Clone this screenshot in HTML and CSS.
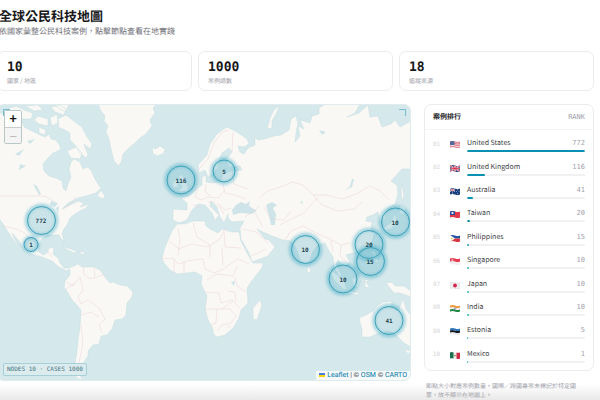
FILE: index.html
```html
<!DOCTYPE html>
<html lang="zh-Hant">
<head>
<meta charset="utf-8">
<meta name="viewport" content="width=device-width, initial-scale=1">
<title>全球公民科技地圖</title>
<link rel="stylesheet" href="styles.css">
</head>
<body>
<main class="page">
  <header class="intro">
    <h1>全球公民科技地圖</h1>
    <p>依國家彙整公民科技案例，點擊節點查看在地實踐</p>
  </header>

  <section class="stats">
    <div class="card stat"><strong>10</strong><span>國家 / 地區</span></div>
    <div class="card stat"><strong>1000</strong><span>案例總數</span></div>
    <div class="card stat"><strong>18</strong><span>追蹤來源</span></div>
  </section>

  <div class="content">
    <section class="map" aria-label="地圖">
      <svg class="world" viewBox="-2 105 412 275" preserveAspectRatio="xMidYMid slice">
        <defs>
          <filter id="glow" x="-50%" y="-50%" width="200%" height="200%"><feGaussianBlur stdDeviation="1.600"/></filter>
        </defs>
        <g class="land">
          <!-- North and Central America -->
          <path d="M-3 112L4 114 10 111 17 113 21 118 24 127 30 130 38 134 45 137 49 134 51 139 56 140 59 144 61 149 58 151 53 153 48 158 43 164 44 171 49 176 56 178 62 181 63 188 66 191 68 184 71 177 69 169 71 162 74 159 80 162 83 169 87 167 91 170 94 177 98 184 101 188 96 193 86 196 78 198 68 203 62 209 70 205 78 201 84 203 80 207 89 204 86 208 80 211 75 214 70 218 67 225 64 229 62 233 64 241 61 239 59 235 48 235 42 239 38 246 39 252 43 255 47 253 49 248 54 247 53 254 58 258 60 263 64 268 70 268 67 271 59 267 52 261 42 257 31 254 24 249 19 241 12 233 15 240 20 246 14 241 8 232 3 224-3 216Z"/>
          <!-- Arctic islands -->
          <path d="M10 117L7 109 16 106 24 110 33 113 31 119 20 119ZM25 106L38 105 43 110 34 111ZM38 116L48 119 48 126 39 124 34 120ZM50 118L57 114 58 123 52 126ZM51 107L60 105 66 109 64 115 55 112ZM39 127L46 130 45 135 39 133ZM58 119L66 115 75 122 82 127 87 137 92 144 90 149 84 144 88 155 86 158 79 152 75 145 70 140 70 133 63 129 59 128ZM53 104L69 104 66 112 60 109ZM67 151L76 147 82 153 80 159 71 158ZM97 196L101 190 105 196 103 199Z"/>
          <!-- Greenland and Iceland -->
          <path d="M98 104L101 111 105 116 104 121 108 126 106 132 109 139 111 149 114 161 119 166 122 160 123 154 129 148 135 143 140 138 146 134 152 126 150 120 155 113 153 108 157 104ZM152 147L155 149 160 146 165 149 164 153 158 156 153 154Z"/>
          <!-- South America -->
          <path d="M68 268L74 266 78 264 82 267 94 267 100 270 105 277 110 283 113 282 120 285 127 286 133 292 132 297 127 303 126 315 122 319 115 320 112 329 107 335 101 336 99 344 93 345 88 351 88 356 84 362 82 369 80 374 82 380 77 378 75 372 75 363 77 351 78 340 80 327 81 310 76 304 72 300 68 293 64 287 65 281 70 275 70 270Z"/>
          <path d="M62 246L71 249 78 252 74 253 66 249ZM79 251L86 253 82 255Z"/>
          <!-- Africa and Madagascar -->
          <path d="M177 224L185 224 193 221 205 221 206 226 210 229 218 233 222 229 232 232 239 232 241 241 247 253 253 263 263 263 262 268 258 273 251 282 247 288 248 303 241 310 239 318 233 328 225 335 217 337 214 335 212 327 208 320 205 309 207 296 201 284 202 276 195 272 187 273 177 274 170 270 164 263 162 259 164 250 168 240 172 231ZM260 300L262 305 257 320 253 319 253 308Z"/>
          <!-- Europe and Asia -->
          <path d="M173 209L187 210 187 203 181 198 189 196 194 192 199 187 202 185 202 177 206 175 206 182 213 183 221 181 223 173 232 171 242 170 240 166 229 167 226 160 232 152 229 148 222 153 220 158 218 168 212 174 208 177 205 170 199 173 198 165 207 155 210 144 217 134 222 130 227 127 237 132 247 139 249 144 244 147 238 146 240 152 244 154 248 148 255 145 255 137 258 140 264 139 274 136 281 135 289 130 291 119 296 116 298 123 296 133 295 142 300 136 298 126 304 129 300 120 310 123 312 116 319 114 319 108 325 104 360 104 355 113 347 117 359 113 368 105 370 117 378 116 382 127 391 124 395 120 400 127 411 121 411 169 402 169 391 181 397 185 398 194 395 204 387 209 385 220 380 222 378 212 373 215 367 217 366 221 372 222 371 229 374 234 372 242 365 248 353 253 346 255 350 262 344 267 338 260 336 264 342 276 339 276 334 267 333 257 329 251 325 243 318 245 313 251 309 263 305 265 300 260 296 248 291 241 283 240 272 236 263 232 257 229 265 239 269 240 275 247 268 256 252 262 249 253 241 239 240 228 244 221 232 222 228 218 228 214 224 223 220 217 217 207 211 201 210 206 219 215 215 221 212 213 205 205 198 204 192 210 187 220 179 223 173 220Z"/>
          <path d="M180 184L179 176 183 174 184 180 188 186 188 191 178 192 182 187ZM173 188L173 181 178 180 178 187ZM267 129L270 118 274 110 280 105 276 114 272 121 272 128ZM308 266L311 270 309 274 307 271Z"/>
          <!-- Australia, Japan and the Pacific islands -->
          <path d="M359 318L366 315 373 311 378 305 383 302 392 301 391 307 398 311 403 299 406 309 411 316 411 347 404 343 396 335 389 331 379 333 370 337 362 337 362 330ZM386 283L392 282 395 286 404 286 411 291 411 297 400 293 394 293 389 287ZM328 268L334 272 344 281 347 290 343 289 334 280ZM347 291L359 293 358 295 347 293ZM352 279L358 276 361 279 358 287 353 286ZM365 280L371 279 366 282 370 288 365 287ZM371 250L376 253 379 263 374 262ZM402 184L404 196 402 201 401 191ZM400 205L406 208 403 215 399 212ZM395 213L397 222 391 229 384 231 384 227 391 223ZM404 349L411 351 408 354Z"/>
        </g>
        <g class="water">
          <path d="M232 210L236 205 241 202 246 204 250 201 249 206 257 211 252 214 240 213 233 215ZM266 205L272 202 277 205 273 208 276 214 275 225 271 225 269 216ZM33 184L37 186 41 194 39 195ZM51 201L58 203 55 207 50 205ZM56 208L59 206 58 214ZM231 282L235 281 234 286ZM352 179L354 179 352 187 345 190 350 186ZM20 164L26 166 19 170ZM15 154L24 149 19 156ZM27 141L35 139 30 144ZM300 202L303 201 302 204ZM319 130L326 132 322 135Z"/>
        </g>
        <g class="borders">
          <path d="M-3 196H45L55 202M63 209L70 205 76 197M3 226L16 229 25 233 31 241M48 251L52 257"/>
          <path d="M84 266L83 273 90 279 100 276 105 274M66 282L73 286 80 277 83 290 78 297 81 304 88 300 99 308 105 319 99 325 102 333M81 315L91 312 99 317M81 325L83 343 79 363M66 289L75 283M94 268L95 277"/>
          <path d="M218 203L225 210 231 208M193 205L201 208M198 189L195 197 201 200 208 197 218 198 224 191M206 184L205 192 211 196M223 184L225 193 235 195 246 199M232 171L234 184 248 189M199 169L208 159 214 143 222 132 229 130M232 152L233 132M208 202L213 202 220 207 224 214M259 206L254 211 245 217"/>
          <path d="M260 197L268 191 283 186 292 182 303 185 313 195 326 195 343 199 358 193 370 186 380 191 389 200M313 195L322 205 338 211 354 209 362 202M280 225L291 219 304 213 318 197M264 207L271 219 284 220 291 211M285 240L291 231 303 226 318 234 330 239 341 245 350 243M242 229L256 232 268 243M331 240L333 252M341 245L340 256 347 262M255 213L263 227M251 256L266 249"/>
          <path d="M169 241L179 249 191 244 208 247 220 239 225 228M178 228L180 240 178 255M193 223L197 237 210 245 210 257M224 231L225 247 241 248M161 259L173 258 178 264 192 260 203 259 205 269 214 273 224 269 230 264 238 259 249 264M222 248L223 265M207 280L216 274 233 276 237 266M206 292L219 293 221 303 232 300 240 308M205 309H222L233 301M235 277L237 286 246 292M217 309L216 323 211 325M222 309L230 309 236 316 231 323 222 325 217 331M174 259V273M184 261V273M228 291L235 292 236 302M227 328L230 326"/>
        </g>
        <g class="nodes">
          <g class="halo" filter="url(#glow)"><circle cx="41.500" cy="220.500" r="15"/><circle cx="31" cy="244.500" r="7"/><circle cx="181" cy="180" r="15"/><circle cx="224" cy="171" r="12"/><circle cx="395.500" cy="222" r="15"/><circle cx="369" cy="244.500" r="15"/><circle cx="370.500" cy="261.500" r="15"/><circle cx="305.500" cy="249.500" r="15"/><circle cx="343" cy="279" r="15"/><circle cx="389" cy="320.500" r="15"/></g>
          <g class="dots"><circle cx="41.500" cy="220.500" r="14"/><circle cx="31" cy="244.500" r="7"/><circle cx="181" cy="180" r="14"/><circle cx="224" cy="171" r="11"/><circle cx="395.500" cy="222" r="14"/><circle cx="369" cy="244.500" r="14"/><circle cx="370.500" cy="261.500" r="14"/><circle cx="305.500" cy="249.500" r="14"/><circle cx="343" cy="279" r="14"/><circle cx="389" cy="320.500" r="14"/></g>
          <g class="counts"><text x="41" y="223">772</text><text x="31" y="247">1</text><text x="181" y="183">116</text><text x="224" y="174">5</text><text x="395" y="225">10</text><text x="369" y="247">20</text><text x="370" y="264">15</text><text x="305" y="252">10</text><text x="343" y="282">10</text><text x="389" y="323">41</text></g>
        </g>
      </svg>
      <span class="corner corner-start"></span>
      <span class="corner corner-end"></span>
      <div class="zoom-control"><button type="button" aria-label="放大">+</button><button type="button" aria-label="縮小" disabled>−</button></div>
      <div class="summary">NODES 10 · CASES 1000</div>
      <div class="credit"><svg class="ukraine" viewBox="0 0 12 8"><path fill="#4c7be1" d="M0 0h12v4H0z"/><path fill="#ffd500" d="M0 4h12v4H0z"/></svg> <a href="#">Leaflet</a> | © <a href="#">OSM</a> © <a href="#">CARTO</a></div>
    </section>

    <aside class="side">
      <section class="card panel">
        <header class="panel-head"><h2>案例排行</h2><span>RANK</span></header>
        <ol class="ranking">
          <li><span class="rank">01</span>
            <svg class="flag" viewBox="0 0 20 14"><path fill="#f3e9e9" d="M0 1q5-2 10 0t10 0v12q-5 2-10 0T0 13z"/><path stroke="#d5475b" stroke-width="1.500" fill="none" d="M0 2q5-2 10 0t10 0M0 5q5-2 10 0t10 0M0 8q5-2 10 0t10 0M0 12q5-2 10 0t10 0"/><path fill="#536b9c" d="M0 1q5-2 9 0v7H0z"/></svg>
            <span class="name">United States</span><span class="value">772</span><span class="bar"><i style="width:100%"></i></span></li>
          <li><span class="rank">02</span>
            <svg class="flag" viewBox="0 0 20 14"><path fill="#284a8c" d="M0 1q5-2 10 0t10 0v12q-5 2-10 0T0 13z"/><path stroke="#fff" stroke-width="3" d="M0 1l20 12M20 1L0 13M10 1v12M0 7h20"/><path stroke="#d32b45" stroke-width="1.600" d="M0 1l20 12M20 1L0 13M10 1v12M0 7h20"/></svg>
            <span class="name">United Kingdom</span><span class="value">116</span><span class="bar"><i style="width:15%"></i></span></li>
          <li><span class="rank">03</span>
            <svg class="flag" viewBox="0 0 20 14"><path fill="#173f7e" d="M0 1q5-2 10 0t10 0v12q-5 2-10 0T0 13z"/><path stroke="#fff" stroke-width="1.500" d="M0 1l10 6M10 1L0 7M5 1v6M0 4h10"/><path stroke="#d93c4e" d="M5 1v6M0 4h10"/><g fill="#fff"><circle cx="5" cy="10" r="1"/><circle cx="15" cy="3" r=".8"/><circle cx="13" cy="7" r=".8"/><circle cx="18" cy="6" r=".8"/><circle cx="15" cy="11" r=".8"/></g></svg>
            <span class="name">Australia</span><span class="value">41</span><span class="bar"><i style="width:5%"></i></span></li>
          <li><span class="rank">04</span>
            <svg class="flag" viewBox="0 0 20 14"><path fill="#e33b4d" d="M0 1q5-2 10 0t10 0v12q-5 2-10 0T0 13z"/><path fill="#294f9c" d="M0 1q5-2 10 0v7H0z"/><circle cx="5" cy="4" r="2.200" fill="#fff"/></svg>
            <span class="name">Taiwan</span><span class="value">20</span><span class="bar"><i style="width:2.600%"></i></span></li>
          <li><span class="rank">05</span>
            <svg class="flag" viewBox="0 0 20 14"><path fill="#2455a4" d="M0 1q5-2 10 0t10 0v6H0z"/><path fill="#d93645" d="M0 7h20v6q-5 2-10 0T0 13z"/><path fill="#fff" d="M0 0l10 7-10 7z"/><circle cx="3.500" cy="7" r="1.700" fill="#efc035"/></svg>
            <span class="name">Philippines</span><span class="value">15</span><span class="bar"><i style="width:2%"></i></span></li>
          <li><span class="rank">06</span>
            <svg class="flag" viewBox="0 0 20 14"><path fill="#f0eeee" d="M0 1q5-2 10 0t10 0v12q-5 2-10 0T0 13z"/><path fill="#e33d50" d="M0 1q5-2 10 0t10 0v6q-5 2-10 0T0 7z"/><circle cx="5" cy="4" r="2" fill="#fff"/><circle cx="6" cy="4" r="1.600" fill="#e33d50"/></svg>
            <span class="name">Singapore</span><span class="value">10</span><span class="bar small"><i style="width:1.300%"></i></span></li>
          <li><span class="rank">07</span>
            <svg class="flag" viewBox="0 0 20 14"><path fill="#eeeeef" stroke="#d2d2d5" stroke-width=".8" d="M0 1q5-2 10 0t10 0v12q-5 2-10 0T0 13z"/><circle cx="10" cy="7" r="3.800" fill="#d7264b"/></svg>
            <span class="name">Japan</span><span class="value">10</span><span class="bar small"><i style="width:1.300%"></i></span></li>
          <li><span class="rank">08</span>
            <svg class="flag" viewBox="0 0 20 14"><path fill="#f2f0ec" d="M0 1q5-2 10 0t10 0v12q-5 2-10 0T0 13z"/><path fill="#f29a3c" d="M0 1q5-2 10 0t10 0v4q-5 2-10 0T0 5z"/><path fill="#218846" d="M0 9q5-2 10 0t10 0v4q-5 2-10 0T0 13z"/><circle cx="10" cy="7" r="1.600" fill="none" stroke="#465c9b"/></svg>
            <span class="name">India</span><span class="value">10</span><span class="bar small"><i style="width:1.300%"></i></span></li>
          <li><span class="rank">09</span>
            <svg class="flag" viewBox="0 0 20 14"><path fill="#e9eaec" d="M0 1q5-2 10 0t10 0v12q-5 2-10 0T0 13z"/><path fill="#17191f" d="M0 5q5-2 10 0t10 0v4q-5 2-10 0T0 9z"/><path fill="#2f75bd" d="M0 1q5-2 10 0t10 0v4q-5 2-10 0T0 5z"/></svg>
            <span class="name">Estonia</span><span class="value">5</span><span class="bar small"><i style="width:.6%"></i></span></li>
          <li><span class="rank">10</span>
            <svg class="flag" viewBox="0 0 20 14"><path fill="#f0eeec" d="M0 1q5-2 10 0t10 0v12q-5 2-10 0T0 13z"/><path fill="#1a714f" d="M0 1q4-2 7 0v12q-4-1-7 0z"/><path fill="#d12a43" d="M13 1q4 1 7 0v12q-4 2-7 0z"/><circle cx="10" cy="7" r="1.700" fill="#a67d51"/></svg>
            <span class="name">Mexico</span><span class="value">1</span><span class="bar small"><i style="width:.1%"></i></span></li>
        </ol>
      </section>
      <p class="note">節點大小對應案例數量。國際／跨國專案未標記於特定國家，故不顯示在地圖上。</p>
    </aside>
  </div>
</main>
</body>
</html>
```
FILE: styles.css
```css
* { box-sizing: border-box; }

html { background: #fff; }

body {
  margin: 0;
  min-height: 100vh;
  overflow: hidden;
  color: #18181b;
  font-family: "Noto Sans CJK TC", "Noto Sans", sans-serif;
  text-rendering: geometricPrecision;
  background: linear-gradient(to top, #e9e9e9, #fff 16px);
}

.page { margin: 0 6px 0 -3px; padding-top: 8px; }

h1, h2, p, ol { margin: 0; padding: 0; }

.intro { padding-left: 2px; }

h1 { font-size: 13px; line-height: 16px; font-weight: 700; }

.intro p { font-size: 8px; line-height: 16px; color: #71717a; }

.card {
  background: #fff;
  border: 1px solid #ececee;
  border-radius: 7px;
}

.stats {
  display: grid;
  grid-template-columns: repeat(3, 1fr);
  gap: 6px;
  margin-top: 11px;
}

.stat {
  display: flex;
  flex-direction: column;
  padding: 8px 9px 4px;
}

.stat strong {
  font: 700 13px/16px "DejaVu Sans Mono", monospace;
}

.stat span { font-size: 6px; line-height: 10px; color: #a1a1aa; }

.content {
  display: grid;
  grid-template-columns: 1fr 170px;
  gap: 13px;
  align-items: start;
  margin-top: 13px;
}

.map {
  position: relative;
  height: 277px;
  overflow: hidden;
  border: 1px solid #e0ebed;
  border-radius: 7px;
  background: #d5e8eb;
}

.world { display: block; width: 100%; height: 100%; }
.land { fill: #faf8f5; stroke: #c6dee1; stroke-width: .5; }
.water { fill: #cfe4e8; }
.borders { fill: none; stroke: #ead2d5; stroke-width: .5; }
.halo { fill: none; stroke: #2fa5c2; stroke-width: 3; opacity: .5; }
.dots circle { fill: #58b4cb; fill-opacity: .3; stroke: #3ca2b9; stroke-width: 1; }
.counts { font: 700 6px "DejaVu Sans Mono", monospace; fill: #1f4551; text-anchor: middle; }

.corner { position: absolute; width: 7px; height: 7px; border: solid #78bdcc; }
.corner-start { top: 4px; left: 5px; border-width: 1px 0 0 1px; }
.corner-end { top: 4px; right: 4px; border-width: 1px 1px 0 0; }

.zoom-control {
  position: absolute;
  top: 5px;
  left: 6px;
  display: flex;
  flex-direction: column;
  border: 1px solid #b9c7c9;
  border-radius: 2px;
}

.zoom-control button {
  width: 16px;
  height: 16px;
  padding: 0;
  border: 0;
  background: #fff;
  color: #111;
  font: 700 12px/16px "DejaVu Sans Mono", monospace;
}

.zoom-control button:disabled { background: #f4f4f4; color: #bbb; font-weight: 400; border-top: 1px solid #ccc; }

.summary {
  position: absolute;
  left: 5px;
  bottom: 4px;
  padding: 0 3px;
  border: 1px solid #a6cfd8;
  border-radius: 2px;
  background: #dcebed;
  color: #3f7482;
  font: 6px/11px "DejaVu Sans Mono", monospace;
}

.credit {
  position: absolute;
  right: 0;
  bottom: 0;
  padding: 0 3px;
  background: #f5f9fa;
  color: #444;
  font: 7px/9px Roboto, "Liberation Sans", sans-serif;
}

.credit a { color: #0078a8; text-decoration: none; }
.ukraine { width: 6px; height: 4px; }

.panel { display: flex; flex-direction: column; min-height: 267px; }

.panel-head {
  display: flex;
  justify-content: space-between;
  align-items: center;
  height: 25px;
  padding: 0 8px;
  border-bottom: 1px solid #f4f4f5;
}

h2 { font-size: 7px; font-weight: 700; color: #27272a; }
.panel-head span { font: 7px/9px "DejaVu Sans Mono", monospace; color: #a1a1aa; }

.ranking {
  display: grid;
  grid-auto-rows: 1fr;
  flex: 1;
  padding: 3px 8px;
  list-style: none;
}

.ranking li {
  display: grid;
  grid-template-columns: 17px 17px 1fr auto;
  grid-template-rows: 12px 2px;
  align-content: center;
  row-gap: 1px;
}

.rank { grid-row: 1 / 3; align-self: center; font: 6px/8px "DejaVu Sans Mono", monospace; color: #d4d4d8; }
.flag { grid-row: 1 / 3; align-self: center; width: 10px; height: 7px; }
.name { font-size: 7px; line-height: 12px; color: #3f3f46; }
.value { font: 7px/12px "DejaVu Sans Mono", monospace; color: #a1a1aa; }
.bar { grid-column: 3 / 5; background: #f1f1f3; border-radius: 1px; overflow: hidden; }
.bar i { display: block; height: 100%; min-width: 1px; background: #0891b2; border-radius: 1px; }
.small i { background: #14b8a6; }

.note { margin: 10px 9px 0 2px; font-size: 6px; line-height: 9px; color: #a1a1aa; }
```
